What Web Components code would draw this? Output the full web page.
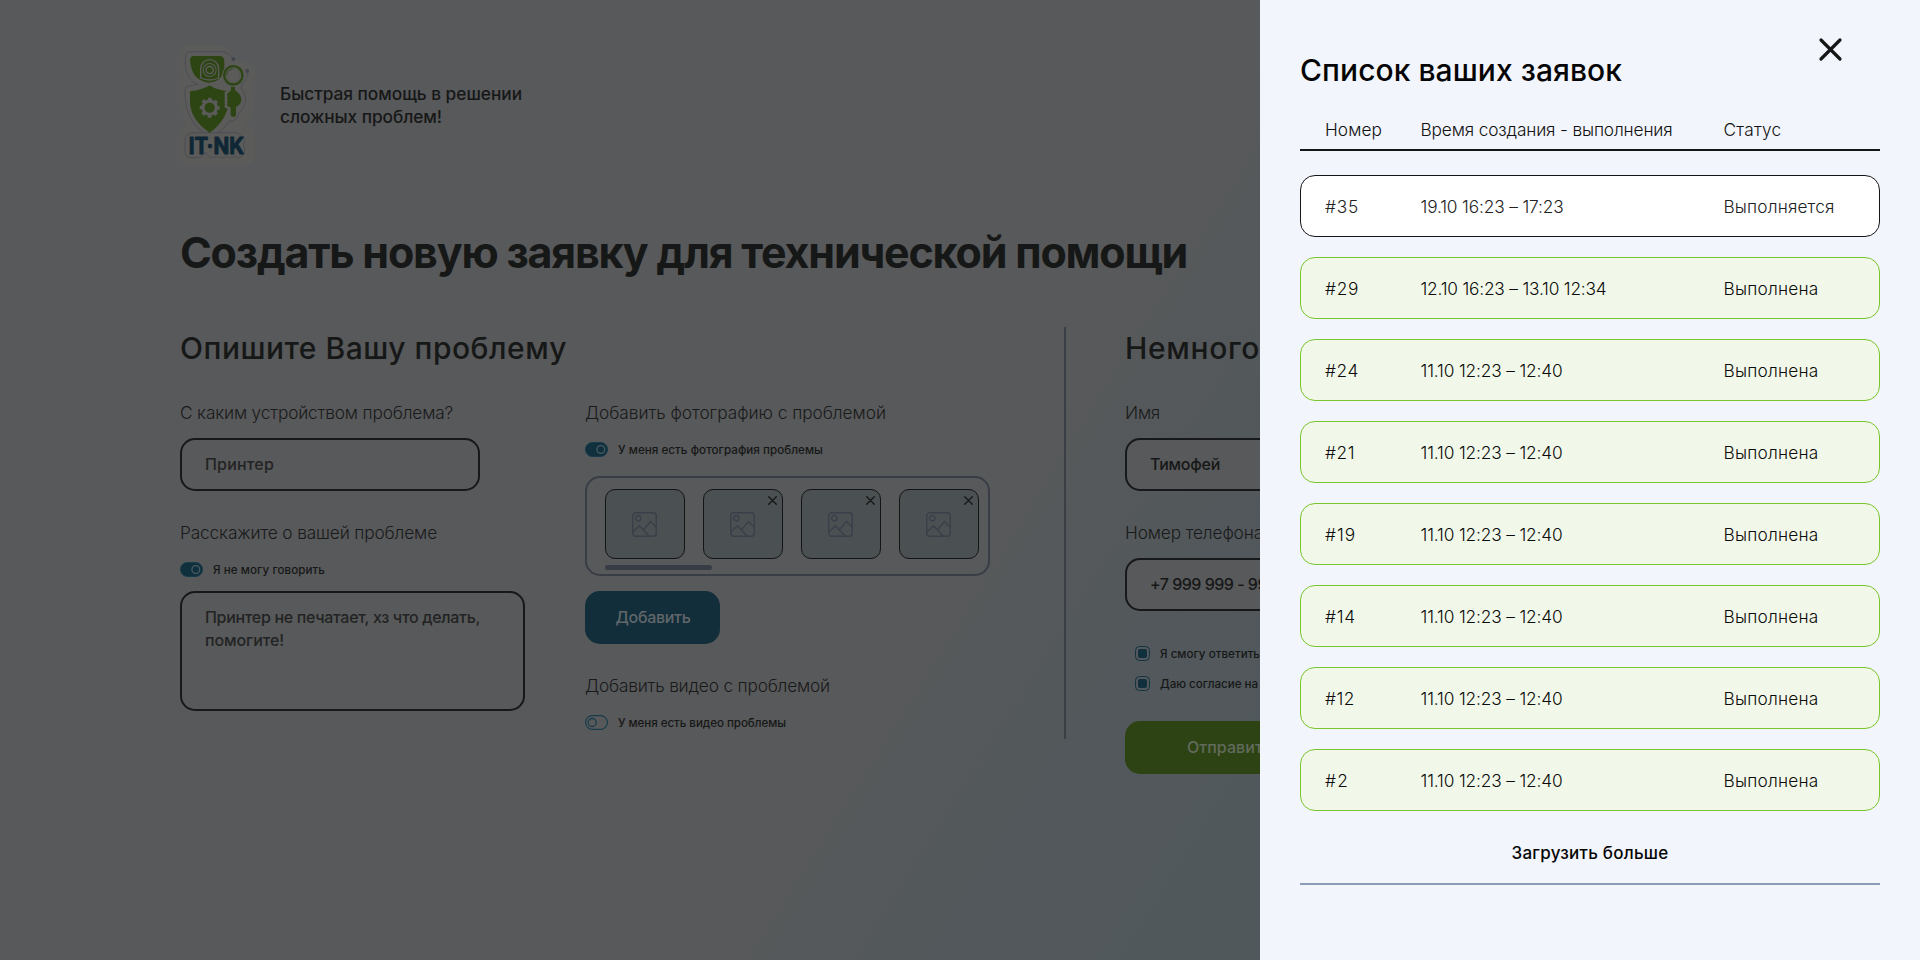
<!DOCTYPE html>
<html lang="ru">
<head>
<meta charset="utf-8">
<title>IT·NK — заявки</title>
<style>
html,body{margin:0;padding:0}
body{width:1920px;height:960px;overflow:hidden;font-family:Inter,"Liberation Sans",sans-serif;color:#161717}
</style>
</head>
<body>
<help-app></help-app>
<script>
const define=(name,html,setup)=>{
  const t=document.createElement('template');t.innerHTML=html;
  customElements.define(name,class extends HTMLElement{
    connectedCallback(){
      if(this.shadowRoot)return;
      this.attachShadow({mode:'open'}).append(t.content.cloneNode(true));
      if(setup)setup(this,this.shadowRoot);
    }
  });
};

/* Text line that spreads its letters over the given width (w). */
define('t-line',`<style>:host{display:block;white-space:nowrap}span{display:inline-block}</style><span><slot></slot></span>`,(el,root)=>{
  const w=+el.getAttribute('w');if(!w)return;
  const s=root.querySelector('span');
  const ls=(w-s.getBoundingClientRect().width)/el.textContent.trim().length;
  s.style.letterSpacing=ls.toFixed(3)+'px';
});

define('brand-logo',`<style>:host{display:block;width:100px;height:130px}svg{display:block}text{font:700 69px Inter,sans-serif}</style>
<svg width="100" height="130" viewBox="30 30 300 390">
<path d="M80 47H180Q212 52 224 82Q236 98 262 98Q284 104 285 135L278 165L280 200V245L255 285Q288 293 286 325V385Q276 404 255 404H85Q60 402 58 375V310Q62 292 80 285Q60 250 58 205L57 165Q66 150 58 130V75Q63 52 80 47Z" fill="#5b5b5a"/>
<g fill="none" stroke="#484b52" stroke-width="2.5">
<path d="M218 84Q202 65 188 65H88Q77 67 76 82V108Q80 150 113 163Q78 167 75 176V200Q78 270 128 305"/>
<path d="M262 124Q264 145 246 163L244 175Q258 190 257 215Q250 238 236 250Q228 275 215 273H208Q192 300 172 309"/>
<path d="M95 308H225Q236 308 240 317Q256 320 254 336L250 346Q260 364 246 379Q234 388 223 379Q211 388 199 378Q185 390 172 379Q155 388 142 375L135 366Q130 384 113 383H90Q76 380 75 365V328Q77 311 95 308Z"/>
</g>
<circle cx="220" cy="87" r="6" fill="#41454c"/><circle cx="262" cy="123" r="6" fill="#41454c"/>
<path d="M98 78H181Q192 80 193 91V112Q190 135 180 145Q166 158 145 158Q119 155 104 136Q92 116 90 90Q91 80 98 78Z" fill="#2c4513"/>
<path d="M122 144V116A27 27 0 0 1 176 116V144Q149 156 122 144Z" fill="none" stroke="#5b5b5a" stroke-width="4"/>
<circle cx="149" cy="120" r="21" fill="#5b5b5a"/><circle cx="149" cy="120" r="15.500" fill="none" stroke="#2c4513" stroke-width="5"/><circle cx="149" cy="120" r="8.500" fill="#2c4513"/>
<path d="M149 166Q170 181 207 184V210Q203 270 149 308Q94 272 90 220V184Q128 180 149 166Z" fill="#2c4513"/>
<circle cx="149" cy="233" r="20" fill="none" stroke="#5b5b5a" stroke-width="9"/>
<circle cx="149" cy="233" r="26" fill="none" stroke="#5b5b5a" stroke-width="8" stroke-dasharray="11 9.42" stroke-dashoffset="5.5"/>
<path d="M212 171H225V181Q245 193 244 211Q243 224 228 232V257Q220 267 211 257V236L198 230V188L211 181Z" fill="#2c4513" stroke="#5b5b5a" stroke-width="7"/>
<path d="M198 186V234" stroke="#5b5b5a" stroke-width="8" stroke-dasharray="6 4"/>
<path d="M213 170H225V181Q244 193 244 210Q243 223 228 231V256Q220 266 212 256V232L204 226V190L213 181Z" fill="#2c4513"/>
<circle cx="220" cy="136" r="29" fill="#5b5b5a" stroke="#5b5b5a" stroke-width="9"/>
<circle cx="220" cy="136" r="27.500" fill="#5b5b5a" stroke="#2c4513" stroke-width="7"/>
<path d="M200 136A20 20 0 0 1 218 117" fill="none" stroke="#2c4513" stroke-width="3"/>
<circle cx="220" cy="136" r="20" fill="none" stroke="#4a5540" stroke-width="1.5"/>
<text x="86" y="371" fill="#0f2735" stroke="#0f2735" stroke-width="3" stroke-linejoin="round" textLength="166" lengthAdjust="spacingAndGlyphs">IT·NK</text>
</svg>`);

define('field-label',`<style>:host{display:block;font-size:17.3px;line-height:24px;font-weight:300;color:#191a1a}</style><slot></slot>`);

define('field-box',`<style>:host{display:flex;align-items:center;box-sizing:border-box;height:53px;border:2px solid #161819;border-radius:15px;padding-left:23px;font-size:16px;line-height:23px;font-weight:500;color:var(--ink,#222323);background:#58595a}
:host([area]){height:120px;flex-direction:column;align-items:flex-start;padding-top:13px}</style><slot></slot>`);

define('toggle-row',`<style>:host{display:flex;align-items:center;gap:10px;height:15px;font-size:11.6px;line-height:15px;font-weight:500;color:#161717}svg{display:block}t-line,::slotted(*){padding-top:1px}.off{display:none}:host([off]) .off{display:block}:host([off]) .on{display:none}</style>
<svg class="on" width="23" height="15"><rect x=".5" y=".5" width="22" height="14" rx="7" fill="#10303d" stroke="#143b4b"/><circle cx="15.8" cy="7.5" r="3.9" fill="none" stroke="#4c5b62" stroke-width="1.3"/></svg>
<svg class="off" width="23" height="15"><rect x=".6" y=".6" width="21.8" height="13.8" rx="6.9" fill="none" stroke="#173d4d" stroke-width="1.2"/><circle cx="7.2" cy="7.5" r="4" fill="none" stroke="#173d4d" stroke-width="1.3"/></svg>
<slot></slot>`);

define('check-row',`<style>:host{display:flex;align-items:center;gap:10px;height:15px;padding-left:10px;font-size:11.6px;line-height:15px;font-weight:500}svg{display:block}::slotted(*){padding-top:1px}</style>
<svg width="15" height="15"><rect x=".5" y=".5" width="14" height="14" rx="4" fill="none" stroke="#14323f"/><rect x="3" y="3" width="9" height="9" rx="2" fill="#10303d"/></svg><slot></slot>`);

define('solid-button',`<style>:host{display:flex;align-items:center;box-sizing:border-box;height:53px;border-radius:15px;font-size:16px;line-height:23px;font-weight:500;color:#61666a}</style><slot></slot>`);

define('photo-tile',`<style>:host{display:grid;place-items:center;position:relative;box-sizing:border-box;width:80px;height:70px;border:1px solid #131414;border-radius:10px;background:#4b5053}svg{display:block}.pic{margin-right:1px}.x{position:absolute;right:5px;top:6px}:host([fixed]) .x{display:none}</style>
<svg class="pic" width="25" height="25" fill="none" stroke="#3b3f49" stroke-width="1.4"><rect x=".7" y=".7" width="23.6" height="23.600" rx="3"/><circle cx="6.2" cy="6.2" r="2.7"/><path d="M.8 20L7.6 13.8L17 24M11.5 17.8L18.6 9.6L24.2 15.2"/></svg>
<svg class="x" width="9" height="9" stroke="#161717" stroke-width="1.3" stroke-linecap="round"><path d="M.7 .7L8.3 8.3M8.3 .7L.7 8.3"/></svg>`);

define('photo-strip',`<style>:host{display:block;box-sizing:border-box;width:405px;height:100px;border:2px solid #383d46;border-radius:15px;padding:11px 0 0 18px}.r{display:flex;gap:18px}.s{width:107px;height:5px;border-radius:2.5px;background:#383c45;margin-top:6px}</style>
<div class="r"><photo-tile fixed></photo-tile><photo-tile></photo-tile><photo-tile></photo-tile><photo-tile></photo-tile></div><div class="s"></div>`);

define('request-form',`<style>
:host{display:block;flex:none;box-sizing:border-box;width:1260px;height:960px;overflow:hidden;padding:40px 0 0 180px;background:linear-gradient(122deg,#58595b 0,#58595a 68%,#52585b 83%,#51585c 100%)}
header{display:flex;align-items:center;gap:10px;height:130px}
brand-logo{margin-left:-10px}
.tag{font-size:17.3px;line-height:23px;font-weight:500}
h1{margin:56px 0 0;font-size:43px;line-height:52px;font-weight:700}
section{display:flex;margin-top:49px;width:1245px}
.left{width:884px;flex:none}
h2{margin:2px 0 0;font-size:30px;line-height:38px;font-weight:500}
.cols{display:flex;margin-top:34px}
.c1{width:405px}
.bar{width:2px;height:412px;background:#3a3f46}
.right{margin-left:59px;width:300px;flex:none}
</style>
<header><brand-logo></brand-logo><div class="tag"><t-line w="242">Быстрая помощь в решении</t-line><t-line w="162">сложных проблем!</t-line></div></header>
<h1><t-line w="1007">Создать новую заявку для технической помощи</t-line></h1>
<section>
 <div class="left"><h2><t-line w="387">Опишите Вашу проблему</t-line></h2>
  <div class="cols">
   <div class="c1">
    <field-label><t-line w="273">С каким устройством проблема?</t-line></field-label>
    <field-box style="width:300px;margin-top:13px"><t-line w="69">Принтер</t-line></field-box>
    <field-label style="margin-top:30px"><t-line w="257">Расскажите о вашей проблеме</t-line></field-label>
    <toggle-row style="margin-top:17px"><t-line w="112">Я не могу говорить</t-line></toggle-row>
    <field-box area style="width:345px;margin-top:14px"><t-line w="275">Принтер не печатает, хз что делать,</t-line><t-line w="79">помогите!</t-line></field-box>
   </div>
   <div>
    <field-label><t-line w="301">Добавить фотографию с проблемой</t-line></field-label>
    <toggle-row style="margin-top:17px"><t-line w="205">У меня есть фотография проблемы</t-line></toggle-row>
    <photo-strip style="margin-top:19px"></photo-strip>
    <solid-button style="width:135px;margin-top:15px;padding-left:30.5px;background:#112e3a"><t-line w="75">Добавить</t-line></solid-button>
    <field-label style="margin-top:30px"><t-line w="245">Добавить видео с проблемой</t-line></field-label>
    <toggle-row off style="margin-top:17px"><t-line w="168">У меня есть видео проблемы</t-line></toggle-row>
   </div>
  </div>
 </div>
 <div class="bar"></div>
 <div class="right"><h2><t-line w="135">Немного</t-line></h2>
  <field-label style="margin-top:34px"><t-line w="35">Имя</t-line></field-label>
  <field-box style="margin-top:13px;--ink:#161717"><t-line w="70">Тимофей</t-line></field-box>
  <field-label style="margin-top:30px"><t-line w="138">Номер телефона</t-line></field-label>
  <field-box style="margin-top:13px;--ink:#161717"><t-line w="117">+7 999 999 - 99</t-line></field-box>
  <check-row style="margin-top:35px"><t-line w="100">Я смогу ответить</t-line></check-row>
  <check-row style="margin-top:15px"><t-line w="98">Даю согласие на</t-line></check-row>
  <solid-button style="margin-top:30px;padding-left:62px;background:#2d4313;color:#626a5c"><t-line w="85">Отправить</t-line></solid-button>
 </div>
</section>`);

define('request-row',`<style>:host{display:grid;grid-template-columns:95.500px 303px 1fr;align-items:center;box-sizing:border-box;height:62px;border:1px solid #78c52c;border-radius:15px;background:#f2f8e9;padding:1px 0 0 24px;color:#0b0c0b}
:host([active]){border-color:#161616;background:#fff;color:#222}</style><slot></slot>`);

define('request-drawer',`<style>
:host{display:block;flex:none;position:relative;box-sizing:border-box;width:660px;height:960px;padding:51px 40px 0;background:#f2f5fb;color:#050505;font-size:17.3px;line-height:24px;font-weight:350}
h2{margin:0;font-size:30px;line-height:38px;font-weight:500}
.close{position:absolute;left:558px;top:37px}
.head{display:grid;grid-template-columns:95.500px 303px 1fr;margin-top:29px;padding:0 0 7px 25px;border-bottom:2px solid #161616;color:#111}
.rows{display:grid;gap:20px;margin-top:24px}
.more{display:flex;justify-content:center;margin-top:30px;padding-bottom:18px;border-bottom:2px solid #8b9cb9;font-weight:500;font-size:17px}
</style>
<h2><t-line w="322">Список ваших заявок</t-line></h2>
<svg class="close" width="25" height="25" stroke="#161616" stroke-width="3.2" stroke-linecap="round"><path d="M3 3L22 22M22 3L3 22"/></svg>
<div class="head"><t-line w="57">Номер</t-line><t-line w="252">Время создания - выполнения</t-line><t-line w="58">Статус</t-line></div>
<div class="rows"></div>
<div class="more"><t-line w="157">Загрузить больше</t-line></div>`,(el,root)=>{
  const day='11.10 12:23 – 12:40';
  const data=[['#35',34,'19.10 16:23 – 17:23',143],['#29',34,'12.10 16:23 – 13.10 12:34',186],['#24',34,day,142],['#21',30,day,142],['#19',31,day,142],['#14',31,day,142],['#12',30,day,142],['#2',24,day,142]];
  root.querySelector('.rows').innerHTML=data.map(([n,nw,t,tw],i)=>`<request-row ${i?'':'active'}><t-line w="${nw}">${n}</t-line><t-line w="${tw}">${t}</t-line><t-line w="${i?95:111}">${i?'Выполнена':'Выполняется'}</t-line></request-row>`).join('');
});

define('help-app',`<style>:host{display:flex;width:1920px;height:960px}</style><request-form></request-form><request-drawer></request-drawer>`);
</script>
</body>
</html>
